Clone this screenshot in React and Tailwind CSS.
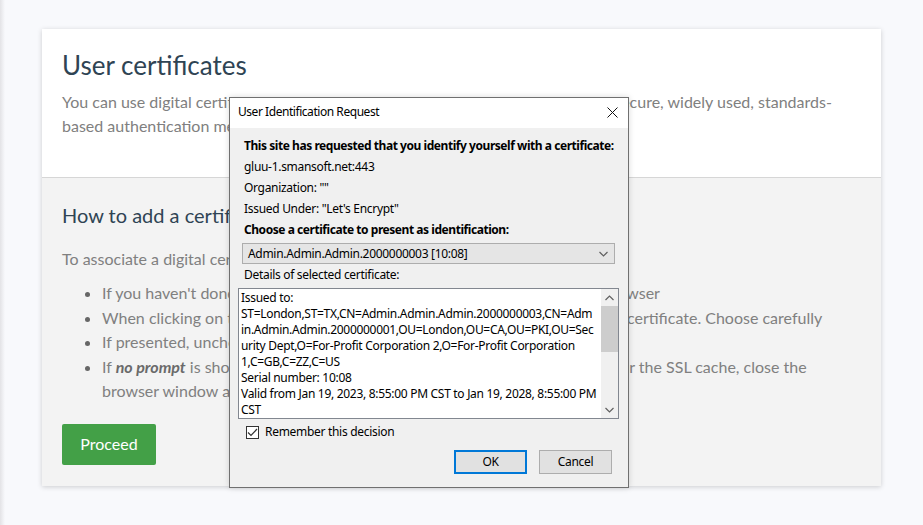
import React from "react";

const certLines = [
  "Issued to:",
  "ST=London,ST=TX,CN=Admin.Admin.Admin.2000000003,CN=Adm",
  "in.Admin.Admin.2000000001,OU=London,OU=CA,OU=PKI,OU=Sec",
  "urity Dept,O=For-Profit Corporation 2,O=For-Profit Corporation",
  "1,C=GB,C=ZZ,C=US",
  "Serial number: 10:08",
  "Valid from Jan 19, 2023, 8:55:00 PM CST to Jan 19, 2028, 8:55:00 PM",
  "CST",
];

function Chevron({ up = false, className = "" }) {
  return (
    <svg width="9" height="6" viewBox="0 0 9 6" className={className}>
      <path d={up ? "M0.5 5 L4.5 1 L8.5 5" : "M0.5 1 L4.5 5 L8.5 1"} fill="none" stroke="#606060" strokeWidth="1.2" />
    </svg>
  );
}

function CertDialog() {
  return (
    <div className="absolute left-[229px] top-[97px] flex h-[391px] w-[400px] flex-col border border-[#707070] bg-[#f0f0f0] font-['Noto_Sans',sans-serif] text-[12px] tracking-[-0.3px] text-black shadow-[0_0_6px_rgba(0,0,0,0.15)]">
      <div className="flex h-[30px] shrink-0 items-start justify-between bg-white pl-[8px] pr-[10px] pt-[6px]">
        <span className="leading-[16px] tracking-[-0.45px]">User Identification Request</span>
        <svg width="11" height="11" viewBox="0 0 11 11" className="mt-[3px]">
          <path d="M0.5 0.5 L10.5 10.5 M10.5 0.5 L0.5 10.5" stroke="#111" strokeWidth="1" />
        </svg>
      </div>
      <div className="flex flex-col pt-[7px]">
        <div className="pl-[14px] leading-[21px]">
          <p className="whitespace-nowrap font-bold tracking-[-0.45px]">This site has requested that you identify yourself with a certificate:</p>
          <p>gluu-1.smansoft.net:443</p>
          <p>Organization: ""</p>
          <p>Issued Under: "Let's Encrypt"</p>
          <p className="whitespace-nowrap font-bold tracking-[-0.45px]">Choose a certificate to present as identification:</p>
        </div>
        <div className="ml-[12px] mt-[3px] flex h-[21px] w-[373px] items-center justify-between border border-[#adadad] bg-[#e5e5e5] pl-[5px] pr-[6px]">
          <span className="leading-[16px]">Admin.Admin.Admin.2000000003 [10:08]</span>
          <Chevron />
        </div>
        <p className="pl-[14px] leading-[22px]">Details of selected certificate:</p>
        <div className="ml-[8px] mt-[2px] flex h-[131px] w-[381px] border border-[#828790] bg-white">
          <div className="flex-1 overflow-hidden pl-[2px] pt-[1px] leading-[16px]">
            {certLines.map((l, i) => (
              <div key={i} className="whitespace-nowrap">{l}</div>
            ))}
          </div>
          <div className="flex w-[17px] shrink-0 flex-col bg-[#f0f0f0]">
            <div className="flex h-[17px] items-center justify-center"><Chevron up /></div>
            <div className="h-[46px] bg-[#cdcdcd]" />
            <div className="flex-1" />
            <div className="flex h-[17px] items-center justify-center"><Chevron /></div>
          </div>
        </div>
        <div className="ml-[16px] mt-[5px] flex items-center gap-[6px] leading-[16px]">
          <div className="flex h-[13px] w-[13px] items-center justify-center border border-[#333] bg-white">
            <svg width="11" height="9" viewBox="0 0 11 9">
              <path d="M1 4.5 L4 7.5 L10 1" fill="none" stroke="#333" strokeWidth="1.2" />
            </svg>
          </div>
          <span>Remember this decision</span>
        </div>
        <div className="ml-[224px] mt-[10px] flex gap-[12px]">
          <button className="h-[24px] w-[73px] border-2 border-[#0078d7] bg-[#e1e1e1] leading-[16px]">OK</button>
          <button className="h-[24px] w-[73px] border border-[#adadad] bg-[#e1e1e1] leading-[16px]">Cancel</button>
        </div>
      </div>
    </div>
  );
}

export default function App() {
  return (
    <div className="relative flex h-[525px] w-[923px] overflow-hidden bg-[#f8f9fc] font-['Lato',sans-serif]">
      <div className="w-[5px] shrink-0 bg-gradient-to-r from-[#e3e3e6] to-[#f8f9fc]" />
      <div className="pl-[37px] pt-[29px]">
        <div className="w-[839px] shadow-[0_1px_5px_rgba(0,0,0,0.18)]">
          <section className="border-b border-[#d6d6d6] bg-white px-5 pb-[39px] pt-[20px]">
            <h1 className="text-[26px] leading-[32px] text-[#2f4454]">User certificates</h1>
            <p className="mt-[9px] whitespace-nowrap text-[16px] leading-[24px] text-[#808080]">
              You can use digital certificates in your browser to certify your identity. This is a secure, widely used, standards-
              <br />
              based authentication method.
            </p>
          </section>
          <section className="bg-[#f3f3f3] px-5 pb-[21px] pt-[25px]">
            <h2 className="text-[20px] leading-[24px] text-[#2f4454]">How to add a certificate</h2>
            <p className="mt-[20px] text-[16px] leading-[24px] text-[#808080]">To associate a digital certificate with your account:</p>
            <ul className="mt-[10px] list-disc pl-10 text-[16px] leading-[24.5px] text-[#808080] marker:text-[#666]">
              <li className="whitespace-nowrap">If you haven't done so already, ensure your certificate is present in your browser</li>
              <li className="whitespace-nowrap">When clicking on the Proceed button, your browser will ask you to select a certificate. Choose carefully</li>
              <li className="whitespace-nowrap">If presented, uncheck "Remember this decision"</li>
              <li className="whitespace-nowrap">
                If <b className="italic text-[#6a6a6a]">no prompt</b> is shown, your browser may have cached a prior choice. To clear the SSL cache, close the
                <br />
                browser window and try again
              </li>
            </ul>
            <button className="mt-[20px] h-[41px] w-[94px] rounded-[2px] bg-[#43a047] text-[16px] text-white">Proceed</button>
          </section>
        </div>
      </div>
      <CertDialog />
    </div>
  );
}
